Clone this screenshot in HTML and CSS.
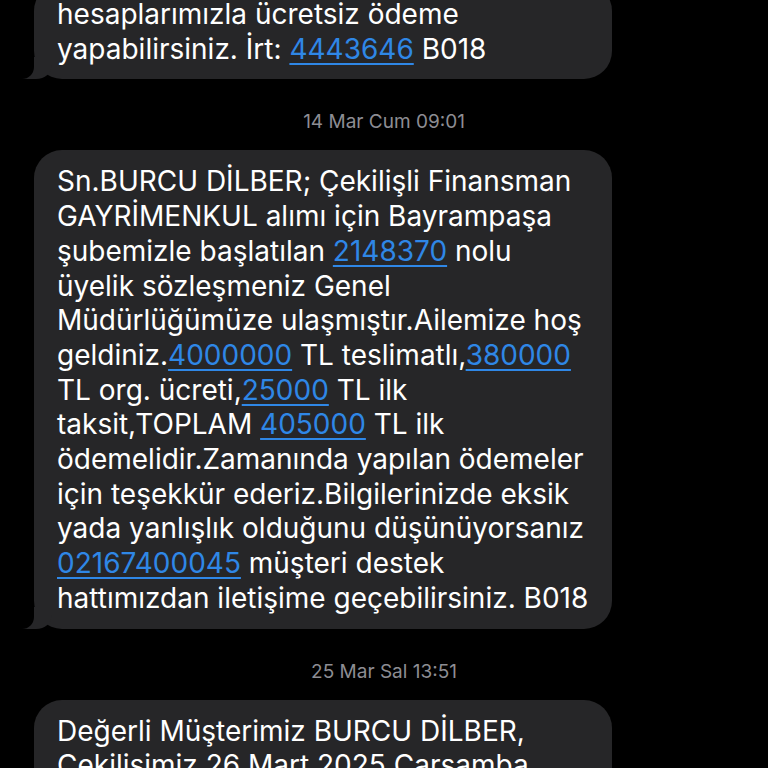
FILE: index.html
```html
<!DOCTYPE html>
<html lang="tr">
<head>
    <meta charset="UTF-8">
    <meta name="viewport" content="width=device-width, initial-scale=1.0">
    <title>Mesajlar</title>
    <link rel="stylesheet" href="styles.css">
</head>
<body>
    <div class="thread">
        <div class="bubble bubble-first">
            hesaplarımızla ücretsiz ödeme<br>
            yapabilirsiniz. İrt: <a href="#">4443646</a> B018
        </div>

        <div class="stamp">14 Mar Cum 09:01</div>

        <div class="bubble">
            Sn.BURCU DİLBER; Çekilişli Finansman<br>
            GAYRİMENKUL alımı için Bayrampaşa<br>
            şubemizle başlatılan <a href="#">2148370</a> nolu<br>
            üyelik sözleşmeniz Genel<br>
            Müdürlüğümüze ulaşmıştır.Ailemize hoş<br>
            geldiniz.<a href="#">4000000</a> TL teslimatlı,<a href="#">380000</a><br>
            TL org. ücreti,<a href="#">25000</a> TL ilk<br>
            taksit,TOPLAM <a href="#">405000</a> TL ilk<br>
            ödemelidir.Zamanında yapılan ödemeler<br>
            için teşekkür ederiz.Bilgilerinizde eksik<br>
            yada yanlışlık olduğunu düşünüyorsanız<br>
            <a href="#">02167400045</a> müşteri destek<br>
            hattımızdan iletişime geçebilirsiniz. B018
        </div>

        <div class="stamp">25 Mar Sal 13:51</div>

        <div class="bubble bubble-open">
            Değerli Müşterimiz BURCU DİLBER,<br>
            Çekilişimiz 26 Mart 2025 Çarşamba
        </div>
    </div>
</body>
</html>
```

FILE: styles.css
```css
body {
    margin: 0;
    padding: 0;
    background-color: #000;
    font-family: Inter, "Noto Sans", sans-serif;
    color: #fff;
    overflow: hidden;
    height: 768px;
}

.thread {
    display: flex;
    flex-direction: column;
    align-items: flex-start;
    margin-top: -17px;
}

.bubble {
    position: relative;
    box-sizing: border-box;
    width: 578px;
    margin-left: 34px;
    background-color: #262628;
    border-radius: 28px;
    padding: 14px 18px 13px 23px;
    font-size: 28px;
    line-height: 34.7px;
}

/* kuyruk */
.bubble::before {
    content: "";
    position: absolute;
    left: -12px;
    bottom: 0;
    width: 30px;
    height: 22px;
    background-color: #262628;
    border-bottom-right-radius: 16px 14px;
}

.bubble::after {
    content: "";
    position: absolute;
    left: -20px;
    bottom: 0;
    width: 20px;
    height: 24px;
    background-color: #000;
    border-bottom-right-radius: 12px;
}

.bubble-open::before,
.bubble-open::after {
    display: none;
}

.bubble a {
    color: #2f87e6;
    text-decoration: underline;
    text-decoration-thickness: 2px;
    text-underline-offset: 4px;
}

.stamp {
    align-self: center;
    font-size: 19px;
    color: #8d8d93;
    margin: 33px 0 18px;
    line-height: 20px;
}
```
